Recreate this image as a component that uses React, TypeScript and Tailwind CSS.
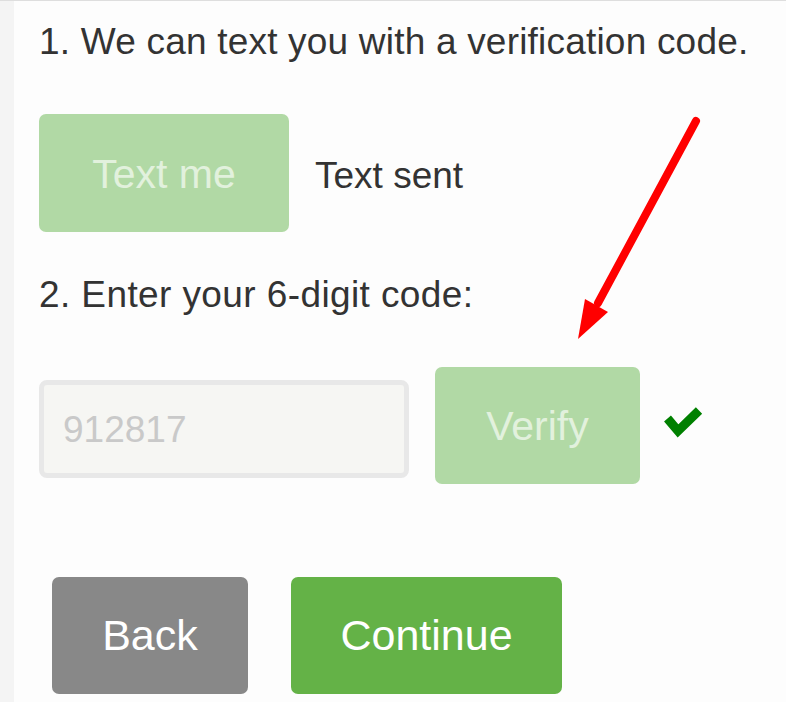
import React from "react";

const font = { fontFamily: '"Liberation Sans", Arial, Helvetica, sans-serif' };

function CheckIcon() {
  return (
    <svg width="40" height="34" viewBox="0 0 40 34" className="mt-[39px] ml-[23px] shrink-0">
      <polyline
        points="4.5,12.5 15,25 36,4.5"
        fill="none"
        stroke="#008000"
        strokeWidth="9"
        strokeLinecap="butt"
        strokeLinejoin="miter"
      />
    </svg>
  );
}

function Annotation() {
  // red arrow drawn over the page
  return (
    <svg
      className="pointer-events-none absolute left-[560px] top-[100px]"
      width="160"
      height="250"
      viewBox="560 100 160 250"
    >
      <line x1="696" y1="120" x2="598" y2="302" stroke="#ff0000" strokeWidth="8" strokeLinecap="round" />
      <polygon points="578,338 585,298 608,311" fill="#ff0000" />
    </svg>
  );
}

export default function App() {
  return (
    <div
      className="relative flex h-[702px] w-[786px] overflow-hidden border-t border-[#dedede] bg-[#fdfdfd] text-[#333333]"
      style={font}
    >
      <div className="w-[14px] shrink-0 bg-[#f4f4f4]" />
      <div className="flex flex-1 flex-col pl-[25px]">
        <h1 className="mt-[20px] text-[37px] font-normal leading-[42px] tracking-[0.2px]">
          1. We can text you with a verification code.
        </h1>

        <div className="mt-[51px] flex items-center gap-[26px]">
          <button className="h-[118px] w-[250px] rounded-[7px] bg-[#b1d9a5] pt-[3px] text-[41px] text-[#e2f1dd]">
            Text me
          </button>
          <span className="mt-[5px] text-[37px] leading-[42px]">Text sent</span>
        </div>

        <h2 className="mt-[42px] text-[37px] font-normal leading-[42px] tracking-[0.4px]">
          2. Enter your 6-digit code:
        </h2>

        <div className="mt-[51px] flex items-start">
          <div className="mt-[13px] flex h-[98px] w-[370px] items-center rounded-[8px] border-[5px] border-[#e8e8e8] bg-[#f6f6f3] pl-[19px] pt-[2px] text-[37px] text-[#c9c9c9]">
            912817
          </div>
          <button className="ml-[26px] h-[117px] w-[205px] rounded-[7px] bg-[#b1d9a5] pt-[2px] text-[41px] text-[#e2f1dd]">
            Verify
          </button>
          <CheckIcon />
        </div>

        <div className="mt-[93px] ml-[13px] flex gap-[43px]">
          <button className="h-[117px] w-[196px] rounded-[7px] bg-[#888888] text-[43px] text-white">
            Back
          </button>
          <button className="h-[117px] w-[271px] rounded-[7px] bg-[#64b247] text-[43px] text-white">
            Continue
          </button>
        </div>
      </div>
      <Annotation />
    </div>
  );
}
